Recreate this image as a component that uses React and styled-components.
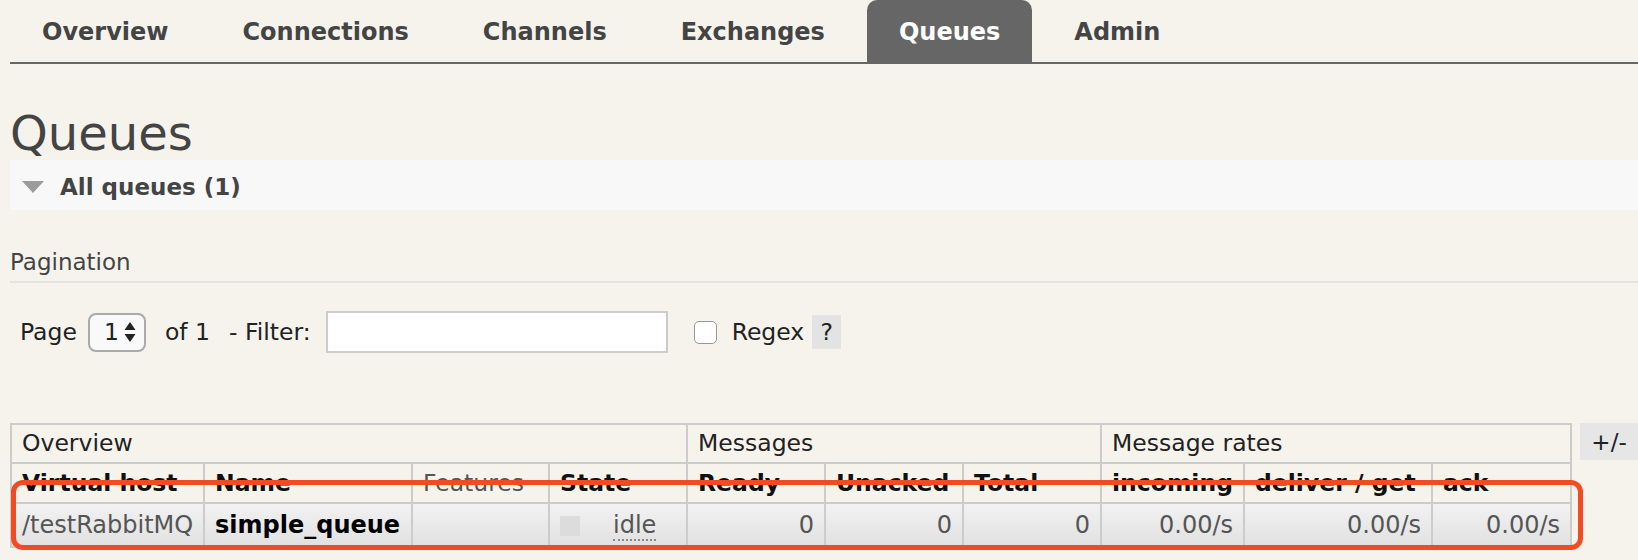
import React from "react";
import styled, { createGlobalStyle } from "styled-components";

const GlobalStyle = createGlobalStyle`
  html, body {
    margin: 0;
    padding: 0;
    background: #f6f3ed;
  }
  body {
    font-family: "DejaVu Sans", Verdana, sans-serif;
    color: #444;
    width: 1638px;
    height: 560px;
    overflow: hidden;
  }
`;

const Page = styled.div`
  padding-left: 10px;
`;

// Menu
const Nav = styled.ul`
  display: flex;
  gap: 10px;
  margin: 0;
  padding: 0;
  list-style: none;
  border-bottom: 2px solid #666;
`;

const Tab = styled.li`
  height: 62px;
  box-sizing: border-box;
  padding: 3px 32px 0;
  line-height: 59px;
  font-size: 24px;
  font-weight: bold;
  color: ${(p) => (p.$active ? "#fff" : "#444")};
  background: ${(p) => (p.$active ? "#666" : "transparent")};
  border-radius: 10px 10px 0 0;
`;

const Title = styled.h1`
  margin: 42px 0 0;
  font-size: 48px;
  line-height: 54px;
  font-weight: normal;
  color: #444;
`;

const SectionBar = styled.div`
  display: flex;
  align-items: center;
  gap: 16px;
  height: 50px;
  box-sizing: border-box;
  padding: 4px 0 0 12px;
  background: #f8f8f8;
`;

const SectionTitle = styled.h2`
  margin: 0;
  font-size: 23px;
  font-weight: bold;
  color: #444;
`;

const SubTitle = styled.h3`
  margin: 38px 0 0;
  padding-bottom: 5px;
  font-size: 23px;
  line-height: 28px;
  font-weight: normal;
  color: #444;
  border-bottom: 2px solid #e3e3e3;
`;

// Pagination row
const PagerRow = styled.div`
  display: flex;
  align-items: center;
  margin-top: 28px;
  padding-left: 10px;
  font-size: 23.5px;
  color: #222;
`;

const Label = styled.span`
  margin-left: ${(p) => p.$gap || 0}px;
  white-space: pre;
`;

const SelectBox = styled.div`
  display: flex;
  align-items: center;
  justify-content: space-between;
  margin-left: 11px;
  width: 58px;
  height: 39px;
  box-sizing: border-box;
  padding: 0 8px 0 14px;
  border: 2px solid #aaa;
  border-radius: 8px;
  background: #f9f9f9;
`;

const FilterInput = styled.div`
  margin-left: 15px;
  width: 342px;
  height: 42px;
  box-sizing: border-box;
  border: 2px solid #ccc;
  background: #fff;
`;

const CheckBox = styled.div`
  margin-left: 26px;
  width: 23px;
  height: 23px;
  box-sizing: border-box;
  border: 1.5px solid #999;
  border-radius: 5px;
  background: #fff;
`;

const HelpBox = styled.span`
  display: flex;
  align-items: center;
  justify-content: center;
  margin-left: 8px;
  width: 29px;
  height: 34px;
  background: #e3e3e3;
  color: #222;
`;

// Table
const TableRow = styled.div`
  position: relative;
  display: flex;
  align-items: flex-start;
  gap: 8px;
  margin-top: 70px;
`;

const List = styled.table`
  border-collapse: collapse;
  table-layout: fixed;
  width: 1560px;
`;

const Cell = styled.td`
  padding: 0 10px;
  border: 2px solid #ccc;
  white-space: nowrap;
  overflow: hidden;
  vertical-align: middle;
  text-align: ${(p) => (p.$right ? "right" : "left")};
`;

const GroupHead = styled(Cell).attrs({ as: "th" })`
  line-height: 37px;
  font-size: 23.5px;
  font-weight: normal;
  color: #222;
`;

const ColHead = styled(Cell).attrs({ as: "th" })`
  line-height: 38px;
  font-size: 23.5px;
  font-weight: ${(p) => (p.$light ? "normal" : "bold")};
  color: ${(p) => (p.$light ? "#555" : "#111")};
`;

const DataCell = styled(Cell)`
  line-height: 42px;
  font-size: 24px;
  color: ${(p) => (p.$strong ? "#000" : "#555")};
  font-weight: ${(p) => (p.$strong ? "bold" : "normal")};
  background: linear-gradient(#f2f2f2, #e1e1e1);
`;

const StatusKey = styled.span`
  display: inline-block;
  width: 20px;
  height: 20px;
  margin-right: 33px;
  vertical-align: middle;
  background: #dcdcdc;
`;

const StateText = styled.abbr`
  text-decoration: none;
  border-bottom: 2px dotted #888;
  line-height: 28px;
  display: inline-block;
  vertical-align: middle;
`;

const ToggleColumns = styled.div`
  display: flex;
  align-items: center;
  justify-content: center;
  width: 58px;
  height: 37px;
  background: #e6e6e6;
  font-size: 23px;
  color: #222;
`;

const Highlight = styled.div`
  position: absolute;
  left: 1px;
  top: 57px;
  width: 1572px;
  height: 70px;
  box-sizing: border-box;
  border: 5px solid #f24b22;
  border-radius: 12px;
  pointer-events: none;
`;

const tabs = ["Overview", "Connections", "Channels", "Exchanges", "Queues", "Admin"];
const colWidths = [193, 208, 137, 138, 138, 138, 138, 143, 188, 139];

const Triangle = () => (
  <svg width="22" height="12" viewBox="0 0 22 12">
    <polygon points="0,0 22,0 11,12" fill="#9b9b9b" />
  </svg>
);

const Arrows = () => (
  <svg width="12" height="22" viewBox="0 0 12 22">
    <polygon points="6,1 11.5,9 0.5,9" fill="#222" />
    <polygon points="0.5,13 11.5,13 6,21" fill="#222" />
  </svg>
);

export default function App() {
  return (
    <>
      <GlobalStyle />
      <Page>
        <Nav>
          {tabs.map((t) => (
            <Tab key={t} $active={t === "Queues"}>
              {t}
            </Tab>
          ))}
        </Nav>

        <Title>Queues</Title>

        <SectionBar>
          <Triangle />
          <SectionTitle>All queues (1)</SectionTitle>
        </SectionBar>

        <SubTitle>Pagination</SubTitle>

        <PagerRow>
          <Label>Page</Label>
          <SelectBox>
            <span>1</span>
            <Arrows />
          </SelectBox>
          <Label $gap={19}>of 1</Label>
          <Label $gap={19}>- Filter:</Label>
          <FilterInput />
          <CheckBox />
          <Label $gap={15}>Regex</Label>
          <HelpBox>?</HelpBox>
        </PagerRow>

        <TableRow>
          <List>
            <colgroup>
              {colWidths.map((w, i) => (
                <col key={i} style={{ width: w }} />
              ))}
            </colgroup>
            <thead>
              <tr>
                <GroupHead colSpan={4}>Overview</GroupHead>
                <GroupHead colSpan={3}>Messages</GroupHead>
                <GroupHead colSpan={3}>Message rates</GroupHead>
              </tr>
              <tr>
                <ColHead>Virtual host</ColHead>
                <ColHead>Name</ColHead>
                <ColHead $light>Features</ColHead>
                <ColHead>State</ColHead>
                <ColHead>Ready</ColHead>
                <ColHead>Unacked</ColHead>
                <ColHead>Total</ColHead>
                <ColHead>incoming</ColHead>
                <ColHead>deliver / get</ColHead>
                <ColHead>ack</ColHead>
              </tr>
            </thead>
            <tbody>
              <tr>
                <DataCell>/testRabbitMQ</DataCell>
                <DataCell $strong>simple_queue</DataCell>
                <DataCell />
                <DataCell>
                  <StatusKey />
                  <StateText title="idle">idle</StateText>
                </DataCell>
                <DataCell $right>0</DataCell>
                <DataCell $right>0</DataCell>
                <DataCell $right>0</DataCell>
                <DataCell $right>0.00/s</DataCell>
                <DataCell $right>0.00/s</DataCell>
                <DataCell $right>0.00/s</DataCell>
              </tr>
            </tbody>
          </List>
          <ToggleColumns>+/-</ToggleColumns>
          <Highlight />
        </TableRow>
      </Page>
    </>
  );
}
